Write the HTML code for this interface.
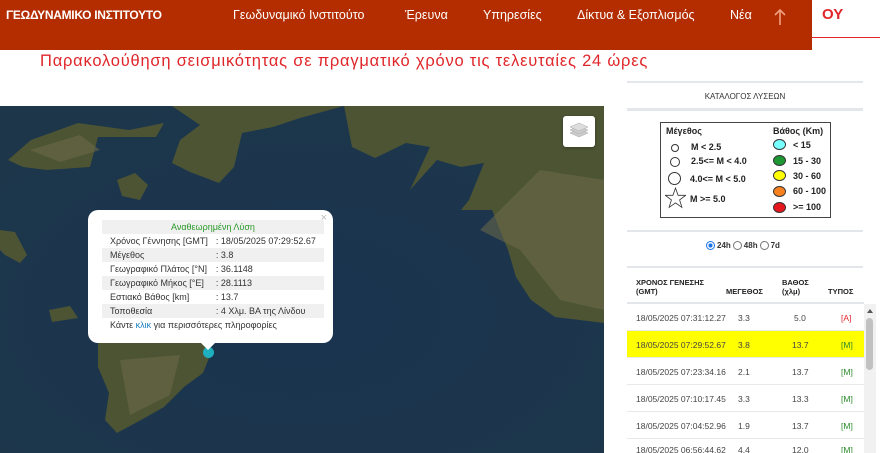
<!DOCTYPE html>
<html><head><meta charset="utf-8">
<style>
*{margin:0;padding:0;box-sizing:border-box}
html,body{width:880px;height:453px;overflow:hidden}
body{background:#fff;font-family:"Liberation Sans","DejaVu Sans",sans-serif;position:relative}
.hdr{position:absolute;left:0;top:0;width:812px;height:50px;background:#b32d00;color:#fff}
.hdr .logo{position:absolute;left:6px;top:8px;font-weight:bold;font-size:12px;letter-spacing:-0.3px}
.hdr .nav{position:absolute;top:8px;font-size:12.5px}
.title{position:absolute;left:40px;top:52px;color:#e0262a;font-size:16.5px;letter-spacing:0.78px}
.map{position:absolute;left:0;top:106px;width:604px;height:347px;background:#1b3348;overflow:hidden}
.popup{position:absolute;left:88px;top:210px;width:245px;height:133px;background:#fff;border-radius:10px;font-size:9px;color:#333}
.popup table{position:absolute;left:14px;top:10px;border-collapse:collapse;width:216px}
.popup td{height:14px;padding:0 8px;white-space:nowrap}
.popup tr.g td{background:#f0f0f0}
.ln{position:absolute;left:627px;width:236px;height:2px;background:#e3e6ea}
.row{position:absolute;left:627px;width:237px;height:27px;border-bottom:1px solid #e8e8e8;font-size:8.5px;color:#444}
.row span{position:absolute;top:9px}
</style></head><body>
<div style="position:absolute;left:822px;top:6px;color:#e0262a;font-weight:bold;font-size:15px">ΟΥ</div>
<div style="position:absolute;left:812px;top:37px;width:68px;height:1px;background:#e0262a"></div>
<div class="hdr">
<div class="logo">ΓΕΩΔΥΝΑΜΙΚΟ ΙΝΣΤΙΤΟΥΤΟ</div>
<div class="nav" style="left:233px">Γεωδυναμικό Ινστιτούτο</div>
<div class="nav" style="left:405px">Έρευνα</div>
<div class="nav" style="left:483px">Υπηρεσίες</div>
<div class="nav" style="left:577px">Δίκτυα &amp; Εξοπλισμός</div>
<div class="nav" style="left:730px">Νέα</div>
<svg style="position:absolute;left:773px;top:8px" width="14" height="18"><path d="M7 17V2M2 7l5-5 5 5" stroke="#f0a080" stroke-width="1.6" fill="none"/></svg>
</div>
<div class="title">Παρακολούθηση σεισμικότητας σε πραγματικό χρόνο τις τελευταίες 24 ώρες</div>

<div class="map">
<svg width="604" height="347" viewBox="0 106 604 347" style="position:absolute;left:0;top:0">
<defs><radialGradient id="s" cx="0.5" cy="0.6" r="0.7"><stop offset="0" stop-color="#1a3450"/><stop offset="1" stop-color="#1d364a"/></radialGradient></defs>
<rect x="0" y="106" width="604" height="347" fill="url(#s)"/>
<g fill="#4c5434">
<path d="M344,106 L352,147 L375,158 L406,143 L430,147 L410,190 L437,160 L461,167 L484,163 L469,200 L461,210 L492,210 L508,250 L516,277 L531,300 L555,317 L604,323 L604,106Z"/>
<path d="M172,106 L344,106 L300,118 L273,127 L242,133 L234,167 L219,183 L190,172 L172,163 L180,140 L200,125Z"/>
<path d="M8,160 L31,140 L78,123 L129,130 L164,123 L156,137 L98,137 L90,167 L47,170 L23,167Z"/>
<path d="M117,180 L135,173 L148,185 L140,200 L122,196Z"/>
<path d="M0,230 L15,232 L27,255 L20,263 L5,255 L0,250Z"/>
<path d="M49,310 L70,306 L78,318 L52,322Z"/>
<path d="M98,343 L203,343 L211,353 L203,373 L184,387 L164,407 L141,420 L117,433 L105,420 L109,393 L98,367Z"/>
</g>
<g fill="#6e6a48" opacity="0.55">
<path d="M480,230 L520,250 L560,300 L604,310 L604,180 L540,170Z"/>
<path d="M120,360 L180,355 L170,395 L130,415Z"/>
<path d="M30,150 L80,135 L100,150 L60,162Z"/>
</g>
</svg>
<div style="position:absolute;left:563px;top:10px;width:32px;height:31px;background:#fff;border-radius:3px;box-shadow:0 1px 3px rgba(0,0,0,.3)">
<svg width="32" height="31"><g fill="#ccc" stroke="#aaa" stroke-width=".5"><path d="M16 21l-9-4 9-4 9 4z"/><path d="M16 18l-9-4 9-4 9 4z"/><path d="M16 15l-9-4 9-4 9 4z" fill="#ddd"/></g></svg>
</div>
<div style="position:absolute;left:203px;top:241px;width:11px;height:11px;border-radius:50%;background:#1fb0c0"></div>
</div>

<div class="popup">
<div style="position:absolute;right:6px;top:2px;color:#bbb;font-size:11px">×</div>
<table>
<tr class="g"><td colspan="2" style="text-align:center;color:#2a9a2a">Αναθεωρημένη Λύση</td></tr>
<tr><td>Χρόνος Γέννησης [GMT]</td><td style="padding-left:0">: 18/05/2025 07:29:52.67</td></tr>
<tr class="g"><td>Μέγεθος</td><td style="padding-left:0">: 3.8</td></tr>
<tr><td>Γεωγραφικό Πλάτος [°N]</td><td style="padding-left:0">: 36.1148</td></tr>
<tr class="g"><td>Γεωγραφικό Μήκος [°E]</td><td style="padding-left:0">: 28.1113</td></tr>
<tr><td>Εστιακό Βάθος [km]</td><td style="padding-left:0">: 13.7</td></tr>
<tr class="g"><td>Τοποθεσία</td><td style="padding-left:0">: 4 Χλμ. ΒΑ της Λίνδου</td></tr>
<tr><td colspan="2">Κάντε <span style="color:#1a7fc0">κλικ</span> για περισσότερες πληροφορίες</td></tr>
</table>
<div style="position:absolute;left:113px;bottom:-7px;width:0;height:0;border-left:7px solid transparent;border-right:7px solid transparent;border-top:7px solid #fff"></div>
</div>

<div class="ln" style="top:81px"></div>
<div style="position:absolute;left:627px;width:236px;top:92px;text-align:center;font-size:8px;color:#333">ΚΑΤΑΛΟΓΟΣ ΛΥΣΕΩΝ</div>
<div class="ln" style="top:108px;height:3px"></div>
<div style="position:absolute;left:660px;top:122px;width:171px;height:96px;border:1px solid #444;font-size:9px;font-weight:bold;color:#222">
<div style="position:absolute;left:5px;top:3px">Μέγεθος</div>
<div style="position:absolute;left:112px;top:3px">Βάθος (Km)</div>
<div style="position:absolute;left:10px;top:21px;width:8px;height:8px;border:1px solid #333;border-radius:50%"></div><div style="position:absolute;left:30px;top:19px">M &lt; 2.5</div>
<div style="position:absolute;left:9px;top:34px;width:10px;height:10px;border:1px solid #333;border-radius:50%"></div><div style="position:absolute;left:30px;top:33px">2.5&lt;= M &lt; 4.0</div>
<div style="position:absolute;left:7px;top:49px;width:13px;height:13px;border:1px solid #333;border-radius:50%"></div><div style="position:absolute;left:29px;top:51px">4.0&lt;= M &lt; 5.0</div>
<svg style="position:absolute;left:4px;top:64px" width="21" height="22"><path d="M10.5 1l2.6 7.3h7.6l-6.1 4.6 2.3 7.5-6.4-4.5-6.4 4.5 2.3-7.5L.3 8.3h7.6z" fill="none" stroke="#333" stroke-width=".8"/></svg><div style="position:absolute;left:29px;top:71px">M &gt;= 5.0</div>
<div style="position:absolute;left:112px;top:16px;width:13px;height:11px;border:1px solid #333;border-radius:50%;background:#7ff"></div><div style="position:absolute;left:132px;top:17px">&lt; 15</div>
<div style="position:absolute;left:112px;top:32px;width:13px;height:11px;border:1px solid #333;border-radius:50%;background:#1e9632"></div><div style="position:absolute;left:132px;top:33px">15 - 30</div>
<div style="position:absolute;left:112px;top:47px;width:13px;height:11px;border:1px solid #333;border-radius:50%;background:#ff0"></div><div style="position:absolute;left:132px;top:48px">30 - 60</div>
<div style="position:absolute;left:112px;top:63px;width:13px;height:11px;border:1px solid #333;border-radius:50%;background:#f7811e"></div><div style="position:absolute;left:132px;top:63px">60 - 100</div>
<div style="position:absolute;left:112px;top:79px;width:13px;height:11px;border:1px solid #333;border-radius:50%;background:#e5161e"></div><div style="position:absolute;left:132px;top:79px">&gt;= 100</div>
</div>
<div class="ln" style="top:230px"></div>
<div style="position:absolute;left:706px;top:241px;font-size:8px;font-weight:bold;color:#333;display:flex;align-items:center;gap:2px">
<span style="display:inline-block;width:9px;height:9px;border-radius:50%;border:1px solid #1a73e8;background:radial-gradient(#1a73e8 40%,#fff 45%)"></span>24h
<span style="display:inline-block;width:9px;height:9px;border-radius:50%;border:1px solid #777"></span>48h
<span style="display:inline-block;width:9px;height:9px;border-radius:50%;border:1px solid #777"></span>7d</div>
<div class="ln" style="top:266px"></div>
<div style="position:absolute;left:636px;top:278px;font-size:7.5px;font-weight:bold;color:#222;line-height:9px">ΧΡΟΝΟΣ ΓΕΝΕΣΗΣ<br>(GMT)</div>
<div style="position:absolute;left:726px;top:287px;font-size:7.5px;font-weight:bold;color:#222">ΜΕΓΕΘΟΣ</div>
<div style="position:absolute;left:782px;top:278px;font-size:7.5px;font-weight:bold;color:#222;line-height:9px">ΒΑΘΟΣ<br>(χλμ)</div>
<div style="position:absolute;left:828px;top:287px;font-size:7.5px;font-weight:bold;color:#222">ΤΥΠΟΣ</div>
<div class="ln" style="top:302px;height:2px;width:237px"></div>
<div class="row" style="top:304px"><span style="left:9px">18/05/2025 07:31:12.27</span><span style="left:111px">3.3</span><span style="left:167px">5.0</span><span style="left:214px;color:#e0262a">[A]</span></div>
<div class="row" style="top:331px;background:#ffff00"><span style="left:9px">18/05/2025 07:29:52.67</span><span style="left:111px">3.8</span><span style="left:165px">13.7</span><span style="left:214px;color:#2a8a2a">[M]</span></div>
<div class="row" style="top:358px"><span style="left:9px">18/05/2025 07:23:34.16</span><span style="left:111px">2.1</span><span style="left:165px">13.7</span><span style="left:214px;color:#2a8a2a">[M]</span></div>
<div class="row" style="top:385px"><span style="left:9px">18/05/2025 07:10:17.45</span><span style="left:111px">3.3</span><span style="left:165px">13.3</span><span style="left:214px;color:#2a8a2a">[M]</span></div>
<div class="row" style="top:412px"><span style="left:9px">18/05/2025 07:04:52.96</span><span style="left:111px">1.9</span><span style="left:165px">13.7</span><span style="left:214px;color:#2a8a2a">[M]</span></div>
<div class="row" style="top:439px;height:14px;border-bottom:none;overflow:hidden"><span style="left:9px;top:6px">18/05/2025 06:56:44.62</span><span style="left:111px;top:6px">4.4</span><span style="left:165px;top:6px">12.0</span><span style="left:214px;top:6px;color:#2a8a2a">[M]</span></div>
<div style="position:absolute;left:864px;top:304px;width:12px;height:149px;background:#f1f1f1"></div>
<div style="position:absolute;left:867px;top:309px;width:0;height:0;border-left:3px solid transparent;border-right:3px solid transparent;border-bottom:4px solid #555"></div>
<div style="position:absolute;left:866px;top:318px;width:7px;height:52px;background:#c1c1c1;border-radius:4px"></div>
</body></html>
